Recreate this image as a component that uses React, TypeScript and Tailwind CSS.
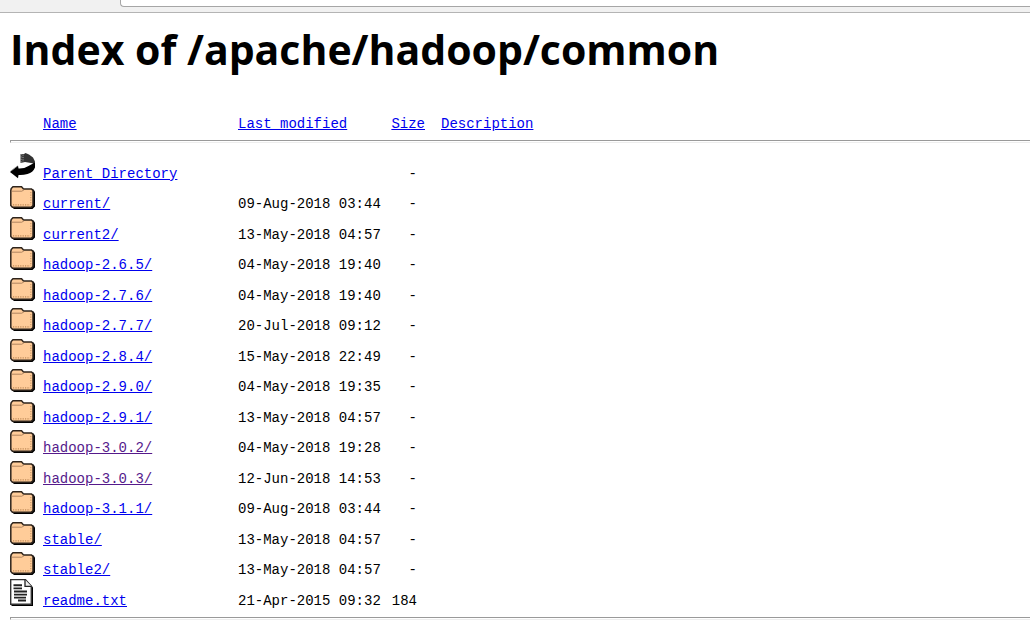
type Kind = "back" | "folder" | "text";

interface Entry {
  kind: Kind;
  name: string;
  modified?: string;
  size: string;
  visited?: boolean;
}

const entries: Entry[] = [
  { kind: "back", name: "Parent Directory", size: "-" },
  { kind: "folder", name: "current/", modified: "09-Aug-2018 03:44", size: "-" },
  { kind: "folder", name: "current2/", modified: "13-May-2018 04:57", size: "-" },
  { kind: "folder", name: "hadoop-2.6.5/", modified: "04-May-2018 19:40", size: "-" },
  { kind: "folder", name: "hadoop-2.7.6/", modified: "04-May-2018 19:40", size: "-" },
  { kind: "folder", name: "hadoop-2.7.7/", modified: "20-Jul-2018 09:12", size: "-" },
  { kind: "folder", name: "hadoop-2.8.4/", modified: "15-May-2018 22:49", size: "-" },
  { kind: "folder", name: "hadoop-2.9.0/", modified: "04-May-2018 19:35", size: "-" },
  { kind: "folder", name: "hadoop-2.9.1/", modified: "13-May-2018 04:57", size: "-" },
  { kind: "folder", name: "hadoop-3.0.2/", modified: "04-May-2018 19:28", size: "-", visited: true },
  { kind: "folder", name: "hadoop-3.0.3/", modified: "12-Jun-2018 14:53", size: "-", visited: true },
  { kind: "folder", name: "hadoop-3.1.1/", modified: "09-Aug-2018 03:44", size: "-" },
  { kind: "folder", name: "stable/", modified: "13-May-2018 04:57", size: "-" },
  { kind: "folder", name: "stable2/", modified: "13-May-2018 04:57", size: "-" },
  { kind: "text", name: "readme.txt", modified: "21-Apr-2015 09:32", size: "184" },
];

function FolderIcon() {
  return (
    <svg width="25" height="23" viewBox="0 0 25 23" aria-hidden="true" className="block">
      <path d="M4 3 H23 L25 5.5 V20.5 L22.5 23 H4 L1.5 21 Z" fill="#000" />
      <path d="M.8 4.5 L1.2 2.5 L3 .7 H11.5 L13.5 2.9 H21.5 L23 4.6 V19.5 L21.2 21.2 H2.5 L.8 19.5 Z" fill="#ffcc99" stroke="#2e241c" strokeWidth="1.5" />
      <path d="M2 5.2 H11.8 L14 3.8" fill="none" stroke="#b08560" strokeWidth="1" />
      <path d="M3 18.8 H20" stroke="#c08a58" strokeWidth="1.2" strokeDasharray="1.2 1.2" />
      <path d="M20.8 6 V19" stroke="#cc9966" strokeWidth="1.2" strokeDasharray="1.2 1.3" />
    </svg>
  );
}

function BackIcon() {
  return (
    <svg width="25" height="26" viewBox="0 0 25 26" aria-hidden="true" className="block">
      <path d="M10.5 1 H14 L15.5 0 L19 1.5 L23 4.5 L25 8.5 L24 10.5 L18 9.5 L15 9 L10.5 10 Z" fill="#333" />
      <path d="M11 1 V10 M13 1.5 V9" stroke="#aaa" strokeWidth="1" strokeDasharray="1.2 1.2" />
      <path d="M25 9 V14.5 Q23 19.5 17.5 21 Q13 22.3 8.5 22 L8 25.2 L0 19 L8 12.8 L8.5 15.5 Q14 15.8 18.5 13 Q22.5 11 25 9 Z" fill="#000" />
      <path d="M.5 18.2 L7.5 13" stroke="#777" strokeWidth=".7" />
    </svg>
  );
}

function TextIcon() {
  return (
    <svg width="25" height="27" viewBox="0 0 25 28" preserveAspectRatio="none" aria-hidden="true" className="block">
      <path d="M2 2 H17 L23 8.5 V28 H1.5 Z" fill="#000" />
      <path d="M.7 .7 H15.5 L21.3 7.5 V26.2 H.7 Z" fill="#fff" stroke="#333" strokeWidth="1.4" />
      <path d="M15 .7 V7.6 H21.5" fill="#eee" stroke="#222" strokeWidth="1.3" />
      <path d="M3.5 6.5 H12 M3.5 9.8 H12 M4 13 H17 M4 16.2 H17 M4 19.4 H16 M8 22.3 H16" stroke="#222" strokeWidth="1.9" />
    </svg>
  );
}

const icons = { back: BackIcon, folder: FolderIcon, text: TextIcon };

function Rule() {
  return (
    <hr className="h-[3px] border-t border-b border-l border-t-[#9a9a9a] border-b-[#eeeeee] border-l-[#9a9a9a]" />
  );
}

function Row({ kind, name, modified, size, visited }: Entry) {
  const Icon = icons[kind];
  return (
    <tr className="h-[30px] align-bottom odd:h-[31px]">
      <td className="p-0 pb-1">
        <Icon />
      </td>
      <td className="p-0">
        <a href="#" className={visited ? "text-[#551a8b] underline" : "text-[#0000ee] underline"}>
          {name}
        </a>
      </td>
      <td className="p-0">{modified}</td>
      <td className="p-0 pr-2 text-right">{size}</td>
      <td className="p-0" />
    </tr>
  );
}

const headings = ["Name", "Last modified", "Size", "Description"];

export default function App() {
  return (
    <div className="min-h-screen bg-white text-black">
      <div className="h-[13px] border-b border-[#b4b4b4] bg-[#f1f1f1] pl-[120px]">
        <div className="h-[7px] rounded-bl-sm border-b border-l border-[#a6a6a6] bg-white" />
      </div>
      <main className="pl-[10px]">
        <h1 className="pt-2 font-['Open_Sans'] text-[41px] leading-[56px] font-bold whitespace-nowrap">
          Index of /apache/hadoop/common
        </h1>
        <table className="mt-[38px] w-full table-fixed border-collapse font-['Liberation_Mono',monospace] text-[14px] leading-[18px] whitespace-nowrap">
          <colgroup>
            <col className="w-[33px]" />
            <col className="w-[195px]" />
            <col className="w-[145px]" />
            <col className="w-[42px]" />
            <col />
          </colgroup>
          <thead>
            <tr className="h-[25px] align-top">
              <th className="p-0" />
              {headings.map((label) => (
                <th
                  key={label}
                  scope="col"
                  className="p-0 text-left font-normal nth-[4]:text-right last:pl-4"
                >
                  <a href="#" className="text-[#0000ee] underline">
                    {label}
                  </a>
                </th>
              ))}
            </tr>
            <tr>
              <td colSpan={5} className="p-0 pb-[9px]">
                <Rule />
              </td>
            </tr>
          </thead>
          <tbody>
            {entries.map((entry) => (
              <Row key={entry.name} {...entry} />
            ))}
          </tbody>
          <tfoot>
            <tr>
              <td colSpan={5} className="p-0 pt-[7px]">
                <Rule />
              </td>
            </tr>
          </tfoot>
        </table>
      </main>
    </div>
  );
}
